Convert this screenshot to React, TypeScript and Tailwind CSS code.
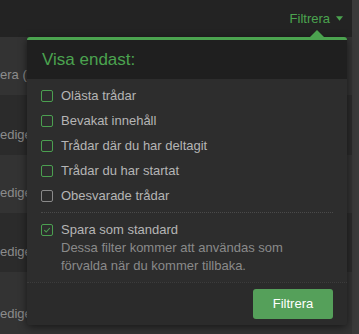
import React from "react";

const options = [
  { label: "Olästa trådar", active: true },
  { label: "Bevakat innehåll", active: true },
  { label: "Trådar där du har deltagit", active: true },
  { label: "Trådar du har startat", active: true },
  { label: "Obesvarade trådar", active: false },
];

const rows = [
  { text: "era (", tone: "bg-[#333333]", h: "h-[58px]" },
  { text: "edige", tone: "bg-[#2b2b2b]", h: "h-[60px]" },
  { text: "edige", tone: "bg-[#333333]", h: "h-[58px]" },
  { text: "edige", tone: "bg-[#2b2b2b]", h: "h-[59px]" },
  { text: "edige", tone: "bg-[#333333]", h: "h-[62px]" },
];

function Box({ active, checked }: { active: boolean; checked?: boolean }) {
  return (
    <span
      className={`flex h-[12px] w-[12px] shrink-0 items-center justify-center rounded-[2px] border ${
        active ? "border-[#4b9f50]" : "border-[#8a8a8a]"
      }`}
    >
      {checked ? (
        <svg viewBox="0 0 10 10" className="h-[8px] w-[8px]">
          <path d="M1.5 5.2 L4 7.5 L8.5 2.5" fill="none" stroke="#4b9f50" strokeWidth="1.4" />
        </svg>
      ) : null}
    </span>
  );
}

export default function App() {
  return (
    <div
      className="relative flex h-[334px] w-[359px] overflow-hidden bg-[#2b2b2b] text-[13px]"
      style={{ fontFamily: '"Liberation Sans", Arial, sans-serif' }}
    >
      <div className="flex w-[352px] flex-col">
        {/* top bar */}
        <div className="flex h-[37px] items-center justify-end bg-[#232323] pr-[9px]">
          <span className="flex items-center gap-[6px] text-[#4ba34f]">
            Filtrera
            <svg viewBox="0 0 8 5" className="h-[5px] w-[7px]">
              <path d="M0 0 H8 L4 5 Z" fill="#4ba34f" />
            </svg>
          </span>
        </div>
        {/* background list rows */}
        {rows.map((r, i) => (
          <div key={i} className={`flex items-end pb-[13px] ${r.tone} ${r.h}`}>
            <span className="whitespace-nowrap leading-[15px] text-[#8c8c8c]">{r.text}</span>
          </div>
        ))}
      </div>
      <div className="w-[7px] bg-[#3a3a3a]" />

      {/* filter popup */}
      <div className="absolute left-[27px] top-[30px] w-[320px]">
        <div className="flex justify-end pr-[23px]">
          <svg viewBox="0 0 14 7" className="block h-[7px] w-[14px]">
            <path d="M0 7 L7 0 L14 7 Z" fill="#4ba34f" />
          </svg>
        </div>
        <div className="overflow-hidden rounded-[3px] border-t-[3px] border-[#4ba34f] bg-[#2d2d2d] shadow-[0_2px_8px_rgba(0,0,0,0.55)]">
          <div className="flex h-[39px] items-center bg-[#1f1f1f] px-[15px] text-[17px] text-[#4ba34f]">
            Visa endast:
          </div>
          <div className="flex flex-col px-[14px] pt-[4px]">
            {options.map((o) => (
              <div key={o.label} className="flex h-[25px] items-center gap-[8px] text-[#b5b5b5]">
                <Box active={o.active} />
                {o.label}
              </div>
            ))}
            <div className="mt-[4px] border-t border-dotted border-[#4a4a4a]" />
            <div className="flex gap-[8px] pt-[8px] pb-[7px]">
              <div className="pt-[3px]">
                <Box active checked />
              </div>
              <div className="flex flex-col leading-[18px]">
                <span className="text-[#b5b5b5]">Spara som standard</span>
                <span className="text-[#8a8a8a]">
                  Dessa filter kommer att användas som
                  <br />
                  förvalda när du kommer tillbaka.
                </span>
              </div>
            </div>
          </div>
          <div className="flex justify-end border-t border-dotted border-[#3c3c3c] bg-[#2b2b2b] px-[14px] py-[6px]">
            <button className="flex h-[30px] w-[80px] items-center justify-center rounded-[3px] bg-[#55a05a] text-white">
              Filtrera
            </button>
          </div>
        </div>
      </div>
    </div>
  );
}
